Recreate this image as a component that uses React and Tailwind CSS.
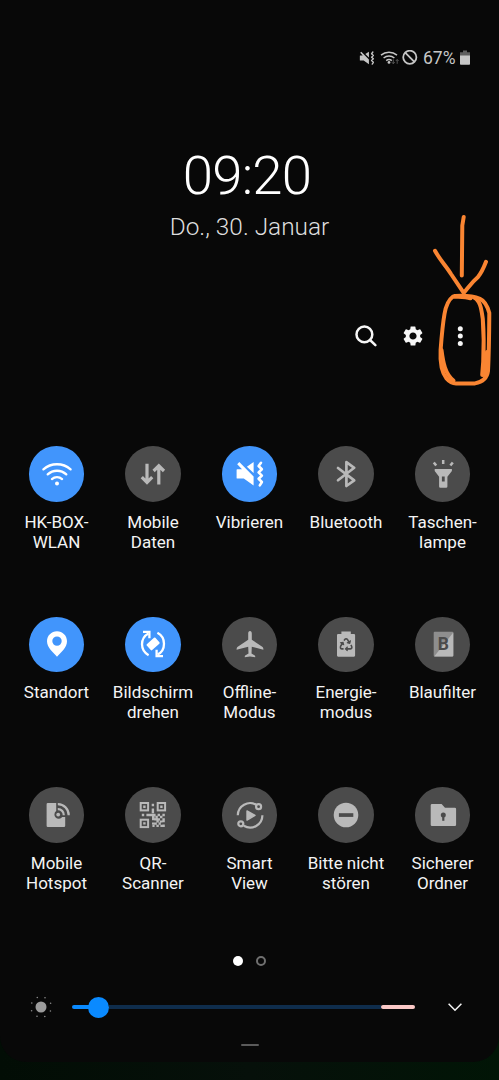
import { FaRecycle } from "react-icons/fa";
import { MdSettings } from "react-icons/md";

function WifiIcon() {
  return (
    <>
      <g fill="none" stroke="currentColor" strokeWidth="2.3" strokeLinecap="round">
        <path d="M2.4 11.4A20.5 20.5 0 0 1 29.6 11.4" />
        <path d="M6.7 16.4A13.7 13.7 0 0 1 25.3 16.4" />
        <path d="M10.9 21.1A7.6 7.6 0 0 1 21.1 21.1" />
      </g>
      <circle cx="16" cy="25.6" r="2" fill="currentColor" />
    </>
  );
}

function DataIcon() {
  return (
    <g fill="none" stroke="currentColor" strokeWidth="3.2">
      <path d="M10 5.7V24.5M4.8 19.2l5.2 5.2 5.2-5.2" />
      <path d="M21.8 26.5V7.7M16.6 13l5.2-5.2 5.2 5.2" />
    </g>
  );
}

function VibrateIcon() {
  return (
    <>
      <path
        d="M3.2 11.3H8L3.2 6.3 5.3 4.1 19.6 18.6V27.6L9.8 20.6H3.2Q2.6 20.6 2.6 20V12Q2.6 11.3 3.2 11.3Z"
        fill="currentColor"
      />
      <path d="M12.9 8.7L19.6 4.1V15Z" fill="currentColor" />
      <path
        d="M27 4.8L24.6 8 27.9 11.2 24.6 14.4 27.9 17.6 24.6 20.8 27.9 24 25.8 27.4"
        fill="none"
        stroke="currentColor"
        strokeWidth="2.6"
        strokeLinejoin="round"
        strokeLinecap="round"
      />
    </>
  );
}

function BluetoothIcon() {
  return (
    <path
      d="M8 10L24.2 22.4 16.4 28V4.2L24.2 9.8 8 22.2"
      fill="none"
      stroke="currentColor"
      strokeWidth="2.7"
      strokeLinejoin="round"
      strokeLinecap="round"
    />
  );
}

function TorchIcon() {
  return (
    <>
      <path
        d="M7.7 11H24.9V13L20.4 18.7V28.4Q20.4 29.7 19.1 29.7H13.4Q12.1 29.7 12.1 28.4V18.7L7.7 13ZM14.9 18.4V23.6H17.7V18.4Z"
        fill="currentColor"
        fillRule="evenodd"
      />
      <path
        d="M16.2 1.9V5.9M6.8 4.4L9.2 7.6M25.8 4.4L23.4 7.6"
        fill="none"
        stroke="currentColor"
        strokeWidth="2.5"
      />
    </>
  );
}

function PinIcon() {
  return (
    <path
      d="M16 3.3C10.4 3.3 6 7.7 6 13.2C6 19.6 12 24.2 16 28.8C20 24.2 26 19.6 26 13.2C26 7.7 21.6 3.3 16 3.3ZM16 8.4A4.7 4.7 0 1 1 16 17.8A4.7 4.7 0 1 1 16 8.4Z"
      fill="currentColor"
      fillRule="evenodd"
    />
  );
}

function RotateIcon() {
  return (
    <>
      <rect
        x="10.3"
        y="12"
        width="11.6"
        height="8"
        rx="1"
        transform="rotate(-42 16 16)"
        fill="currentColor"
      />
      <g fill="none" stroke="currentColor" strokeWidth="2.3">
        <path d="M11.6 27.2A12.4 12.4 0 0 1 11.4 5.4" />
        <path d="M6 3.9H12.4V10.2" />
        <path d="M20.4 4.8A12.4 12.4 0 0 1 20.6 26.6" />
        <path d="M26 28.1H19.6V21.8" />
      </g>
    </>
  );
}

function PlaneIcon() {
  return (
    <path
      d="M16 2.9C17.2 2.9 17.8 4 17.8 5.6V11.8L28.6 19Q29.5 19.7 29.4 21.7L17.8 18.8 17.5 25.4 20.8 27.4Q21.4 28 21.2 29.2L16 28.4 10.8 29.2Q10.6 28 11.2 27.4L14.5 25.4 14.2 18.8 2.6 21.7Q2.5 19.7 3.4 19L14.2 11.8V5.6C14.2 4 14.8 2.9 16 2.9Z"
      fill="currentColor"
    />
  );
}

function EnergyIcon() {
  return (
    <>
      <path
        d="M11.4 3.4H20.8V5.9H24Q25.1 5.9 25.1 7V27.6Q25.1 28.7 24 28.7H8.1Q7 28.7 7 27.6V7Q7 5.9 8.1 5.9H11.4Z"
        fill="currentColor"
      />
      <FaRecycle x="9.4" y="10" size={13.4} color="#4b4b4b" />
    </>
  );
}

function BlueFilterIcon() {
  return (
    <>
      <rect x="6.7" y="3.7" width="19.6" height="24.7" rx="1" fill="#8e8e8e" />
      <path d="M26.3 4.5V27.4Q26.3 28.4 25.3 28.4H7.2Z" fill="currentColor" />
      <text
        x="16.4"
        y="21.8"
        textAnchor="middle"
        fontSize="17.5"
        fontWeight="700"
        fontFamily="Roboto, sans-serif"
        fill="#4b4b4b"
      >
        B
      </text>
    </>
  );
}

function HotspotIcon() {
  return (
    <>
      <path
        d="M6.8 4H15.2V12A4.3 4.3 0 1 0 21.2 18H24.2V26.8Q24.2 28 23 28H6.8Q5.6 28 5.6 26.8V5.2Q5.6 4 6.8 4Z"
        fill="currentColor"
      />
      <circle cx="17.2" cy="15.6" r="1.9" fill="currentColor" />
      <path
        d="M16.8 10.2A5.8 5.8 0 0 1 22.8 16.2M16.8 5.2A10.8 10.8 0 0 1 27.7 16.2"
        fill="none"
        stroke="currentColor"
        strokeWidth="2.2"
      />
    </>
  );
}

function QrIcon() {
  return (
    <>
      <g fill="none" stroke="currentColor" strokeWidth="2">
        <rect x="3.7" y="4" width="7.4" height="7.4" />
        <rect x="20.7" y="4" width="7.4" height="7.4" />
        <rect x="3.7" y="20.7" width="7.4" height="7.4" />
      </g>
      <path
        d="M6.2 6.5h2.4v2.4H6.2zM23.2 6.5h2.4v2.4h-2.4zM6.2 23.2h2.4v2.4H6.2zM14.7 4.8h2.4v2.4h-2.4zM14.7 9.6h2.4v4.6h-2.4zM4.8 14.8h2.4v2.4H4.8zM9.4 14.8h9.2v2.4H9.4zM20.6 14.8h2.4v2.4h-2.4zM25.4 14.8h2.4v2.4h-2.4zM15 17.2h2.6v4H15zM18.4 16.8h2.4v2.4h-2.4zM23 16.8h2.4v2.4H23zM17.4 19.2h5.6v2.2h-5.6zM25.4 19.2h2.4v4h-2.4zM15 23.4h2.4v2.2H15zM19.4 21.4h2.4v2.2h-2.4zM22.8 21.4h2.6v2.2h-2.6zM17.4 23.6h2.4v2.2h-2.4zM21.6 23.6h2.2v2.2h-2.2zM25.4 25.6h2.4v2.4h-2.4zM15.4 25.8h2.2V28h-2.2zM19.4 25.8h2.4V28h-2.4zM23.4 25.8h2V28h-2z"
        fill="currentColor"
      />
    </>
  );
}

function SmartViewIcon() {
  return (
    <>
      <g fill="none" stroke="currentColor" strokeWidth="2.2">
        <path d="M3.8 16.2A12.3 12.3 0 0 1 22.3 5.8" />
        <circle cx="24.6" cy="7.7" r="2.5" />
        <path d="M28.4 16.2A12.3 12.3 0 0 1 9.8 26.8" />
        <circle cx="6.8" cy="24.8" r="2.5" />
      </g>
      <path
        d="M13 11.9L21 16.3 13 21.1Z"
        fill="currentColor"
        stroke="currentColor"
        strokeWidth="1.4"
        strokeLinejoin="round"
      />
    </>
  );
}

function DndIcon() {
  return (
    <>
      <circle cx="16" cy="16" r="12.3" fill="currentColor" />
      <rect x="8.9" y="14.2" width="14.4" height="3.7" fill="#4b4b4b" />
    </>
  );
}

function FolderIcon() {
  return (
    <>
      <path
        d="M5 4.9H14.6L18 8.7H27.8Q29.1 8.7 29.1 10V25.8Q29.1 27.1 27.8 27.1H5Q3.7 27.1 3.7 25.8V6.2Q3.7 4.9 5 4.9Z"
        fill="currentColor"
      />
      <circle cx="16.3" cy="16" r="2.5" fill="#4b4b4b" />
      <rect x="15.2" y="17" width="2.2" height="4.8" fill="#4b4b4b" />
    </>
  );
}

const tiles = [
  { label: ["HK-BOX-", "WLAN"], icon: WifiIcon, active: true },
  { label: ["Mobile", "Daten"], icon: DataIcon },
  { label: ["Vibrieren"], icon: VibrateIcon, active: true },
  { label: ["Bluetooth"], icon: BluetoothIcon },
  { label: ["Taschen-", "lampe"], icon: TorchIcon },
  { label: ["Standort"], icon: PinIcon, active: true },
  { label: ["Bildschirm", "drehen"], icon: RotateIcon, active: true },
  { label: ["Offline-", "Modus"], icon: PlaneIcon },
  { label: ["Energie-", "modus"], icon: EnergyIcon },
  { label: ["Blaufilter"], icon: BlueFilterIcon },
  { label: ["Mobile", "Hotspot"], icon: HotspotIcon },
  { label: ["QR-", "Scanner"], icon: QrIcon },
  { label: ["Smart", "View"], icon: SmartViewIcon },
  { label: ["Bitte nicht", "stören"], icon: DndIcon },
  { label: ["Sicherer", "Ordner"], icon: FolderIcon },
];

function Tile({ label, icon: Icon, active }) {
  return (
    <button className="flex flex-col items-center">
      <span
        className={`flex size-[55.5px] items-center justify-center rounded-full ${
          active ? "bg-[#4195fc] text-white" : "bg-[#4b4b4b] text-[#b9b9b9]"
        }`}
      >
        <svg viewBox="0 0 32 32" className="size-8">
          <Icon />
        </svg>
      </span>
      <span className="mt-[10px] text-[17px] leading-5 whitespace-nowrap text-[#f4f4f4]">
        {label.map((line) => (
          <span key={line} className="block">
            {line}
          </span>
        ))}
      </span>
    </button>
  );
}

function StatusBar() {
  return (
    <div className="flex h-4 items-center pl-[359px] text-[#c6c6c6]">
      <svg viewBox="1 1 30 30" className="size-4">
        <VibrateIcon />
      </svg>
      <svg viewBox="0 0 20 16" className="ml-[5px] h-4 w-5">
        <g fill="none" stroke="currentColor" strokeWidth="1.5">
          <path d="M1 5.2A12.5 12.5 0 0 1 17 5.2" />
          <path d="M3.6 8A8.4 8.4 0 0 1 14.4 8" />
          <path d="M6.2 10.6A4.4 4.4 0 0 1 11.8 10.6" />
        </g>
        <circle cx="9" cy="12.4" r="1.4" fill="currentColor" />
        <path
          d="M13.3 9.4V13.6M11.9 12.2L13.3 13.8 14.7 12.2M17.2 13.8V9.6M15.8 11L17.2 9.4 18.6 11"
          fill="none"
          stroke="#555"
          strokeWidth="1"
        />
      </svg>
      <svg viewBox="0 0 16 16" className="ml-[2px] size-4">
        <g fill="none" stroke="currentColor" strokeWidth="1.8">
          <circle cx="7.8" cy="7.3" r="6.6" />
          <path d="M3.2 2.7L12.4 11.9" />
        </g>
      </svg>
      <span className="ml-[5px] w-[35px] text-[17.5px] leading-4 whitespace-nowrap">67%</span>
      <svg viewBox="0 0 10 16" className="ml-[2px] h-4 w-2.5">
        <path d="M3 .6H7V2.2H10V6H0V2.2H3Z" fill="#5e5e5e" />
        <path d="M0 5.4H10V14Q10 14.8 9.2 14.8H.8Q0 14.8 0 14Z" fill="currentColor" />
      </svg>
    </div>
  );
}

function Brightness() {
  return (
    <div className="flex h-6 items-center pl-[29px] text-[#9b9b9b]">
      <svg viewBox="0 0 24 24" className="size-6">
        <circle cx="12" cy="12" r="5.5" fill="currentColor" />
        <g fill="#8a8a8a">
          <circle cx="8.3" cy="2.5" r=".8" />
          <circle cx="16" cy="2.7" r=".8" />
          <circle cx="21.6" cy="8.3" r=".8" />
          <circle cx="21.4" cy="16" r=".8" />
          <circle cx="15.8" cy="21.5" r=".8" />
          <circle cx="8" cy="21.3" r=".8" />
          <circle cx="2.6" cy="15.8" r=".8" />
          <circle cx="2.8" cy="8" r=".8" />
        </g>
      </svg>
      <div className="ml-[19px] flex h-6 w-[343px] items-center">
        <div className="h-1 w-[17px] rounded-l-full bg-[#0a8aff]" />
        <div className="-ml-px size-[21px] rounded-full bg-[#0a8aff]" />
        <div className="h-1 flex-1 bg-[#0f2d4c]" />
        <div className="h-1 w-[34px] rounded-sm bg-[#fac8c6]" />
      </div>
      <svg viewBox="0 0 16 10" className="ml-8 h-2.5 w-4">
        <path d="M1.6 1.8L8 8.2 14.4 1.8" fill="none" stroke="#f4f4f4" strokeWidth="1.5" />
      </svg>
    </div>
  );
}

// hand-drawn marker around the overflow menu
function Marker() {
  return (
    <svg
      viewBox="430 210 69 180"
      className="pointer-events-none absolute top-[210px] left-[430px] h-[180px] w-[69px]"
      fill="none"
      stroke="#fa8532"
      strokeWidth="4"
      strokeLinecap="round"
      strokeLinejoin="round"
    >
      <path d="M463.7 217L462.3 225.5 461.8 275.5" />
      <path d="M435 250.8C440 260 446 266 451 274L463.7 292.8C468 288 471 283 478 277C482 272 484 267 486 261.8" />
      <path d="M470.5 298.3C465 296.5 458 297 453 296.5C447 301 445.5 308 444.5 314C442.5 325 441.5 338 440.6 350C440 361 440.5 371 446.5 378.5C449.5 382 452 383.4 456 383.4L475 383.4C482 382 487 379 488 371C489 352 489.2 330 489.3 313C487.5 306 485 301 480 298.8C473 296 463 295.5 455 296" />
      <path d="M474 297.5C481 301 481.5 311 482.8 319C484 335 483.8 350 483.2 362L482.2 375" />
      <path d="M441.5 350C443 362 445 374 453.5 380.5" />
      <path d="M487 352L485 376" />
    </svg>
  );
}

export default function App() {
  return (
    <div className="relative h-[1080px] w-[499px] overflow-hidden bg-[#020b04] bg-linear-to-r from-[#020d05] via-[#06100a] to-[#011506] font-[Roboto,sans-serif]">
      <div className="flex h-[1062px] flex-col rounded-b-[26px] bg-[#080808] pt-[50px]">
        <StatusBar />

        <div className="mt-[79px] flex flex-col items-center font-light">
          <div className="pr-[5px] text-[54.5px] leading-[60px] tracking-[-0.8px] text-white">
            09:20
          </div>
          <div className="mt-[7px] text-[24.4px] leading-[30px] text-[#dedede]">
            Do., 30. Januar
          </div>
        </div>

        <div className="mt-[82px] flex h-6 items-center pl-[354px] text-[#f6f6f6]">
          <svg viewBox="0 0 24 24" className="size-6">
            <g fill="none" stroke="currentColor" strokeWidth="2.5" strokeLinecap="round">
              <circle cx="10.4" cy="10.4" r="7.9" />
              <path d="M16 16L21.4 21.2" />
            </g>
          </svg>
          <MdSettings className="ml-[23px]" size={24} />
          <svg viewBox="0 0 8 24" className="ml-[31px] h-6 w-2">
            <g fill="currentColor">
              <circle cx="4.3" cy="4.8" r="2.5" />
              <circle cx="4.3" cy="12.1" r="2.5" />
              <circle cx="4.3" cy="19.4" r="2.5" />
            </g>
          </svg>
        </div>

        <div className="mx-auto mt-[98px] grid h-[512px] w-[482.5px] grid-cols-5 grid-rows-3 items-start">
          {tiles.map((tile) => (
            <Tile key={tile.label.join("")} {...tile} />
          ))}
        </div>

        <div className="-mt-[2px] flex h-2.5 items-center gap-[13px] pl-[233px]">
          <span className="size-2.5 rounded-full bg-white" />
          <span className="size-2.5 rounded-full border-2 border-[#707070]" />
        </div>

        <div className="mt-[29px]">
          <Brightness />
        </div>

        <div className="mx-auto mt-[25px] h-0.5 w-[18px] rounded-full bg-[#5a5a5a]" />
      </div>
      <Marker />
    </div>
  );
}
